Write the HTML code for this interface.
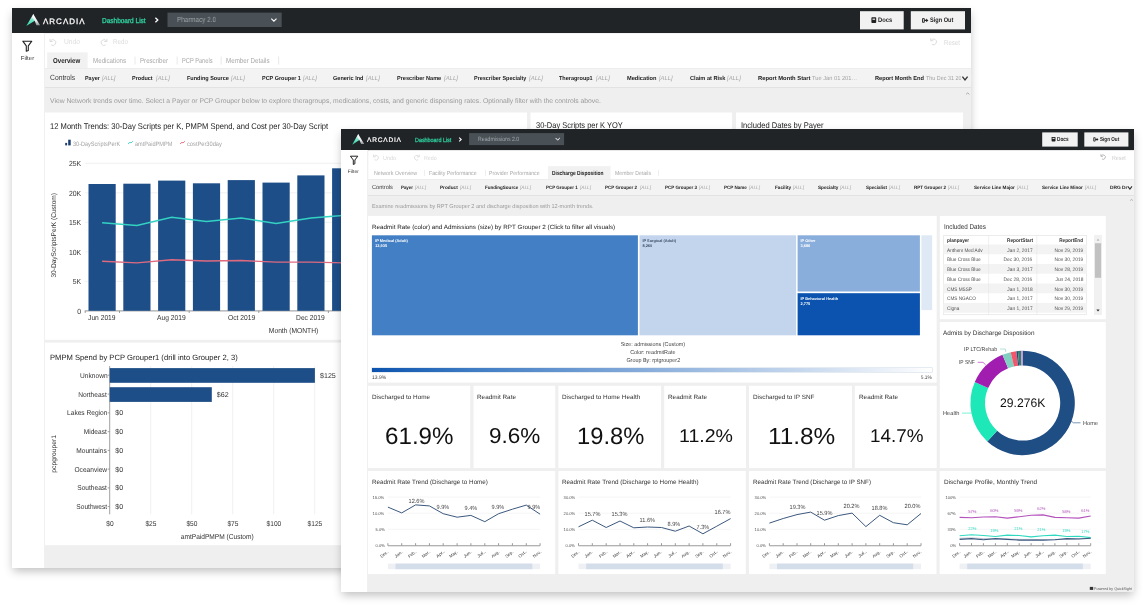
<!DOCTYPE html>
<html><head><meta charset="utf-8"><title>Arcadia dashboards</title>
<style>
html,body{margin:0;padding:0;background:#fff;}
body{width:1146px;height:609px;position:relative;overflow:hidden;font-family:"Liberation Sans",sans-serif;text-rendering:geometricPrecision;}
#w{position:absolute;left:0;top:0;width:1146px;height:609px;will-change:transform;}
.r{position:absolute;}
.t{position:absolute;white-space:nowrap;line-height:0;}
.t i{display:inline-block;width:0;height:40px;}
svg{position:absolute;left:0;top:0;overflow:visible;}
</style></head><body><div id="w">
<div class="r" style="left:12.00px;top:8.00px;width:959.00px;height:560.00px;background:#efefef;box-shadow:0 4px 9px -1px rgba(0,0,0,.26);"></div>
<svg width="1146" height="609"><rect x="12.00" y="8.00" width="959.00" height="25.20" fill="#212427"/></svg>
<div class="r" style="left:12.00px;top:33.20px;width:33.00px;height:534.80px;background:#fff;border-right:1px solid #f0f0f0;box-sizing:border-box;"></div>
<svg width="1146" height="609"><rect x="45.00" y="33.20" width="926.00" height="34.80" fill="#fff"/></svg>
<svg width="1146" height="609"><rect x="47.20" y="52.40" width="40.40" height="15.80" fill="#f1f1f1"/></svg>
<div class="r" style="left:45.00px;top:68.00px;width:926.00px;height:19.50px;background:#f3f3f3;border-top:1px solid #ededed;border-bottom:1px solid #e2e2e2;box-sizing:border-box;"></div>
<svg width="1146" height="609"><rect x="45.00" y="112.50" width="482.00" height="227.30" fill="#fff"/></svg>
<svg width="1146" height="609"><rect x="45.00" y="342.60" width="482.00" height="202.60" fill="#fff"/></svg>
<svg width="1146" height="609"><rect x="530.50" y="112.50" width="201.60" height="100.00" fill="#fff"/></svg>
<svg width="1146" height="609"><rect x="736.00" y="112.50" width="227.00" height="100.00" fill="#fff"/></svg>
<svg width="1146" height="609" viewBox="0 0 1146 609">
<defs>
<linearGradient id="lgA" x1="0" y1="0" x2="0" y2="1"><stop offset="0" stop-color="#ffffff"/><stop offset=".45" stop-color="#7fe8cf"/><stop offset="1" stop-color="#27d3a2"/></linearGradient>
<linearGradient id="lgB" x1="0" y1="0" x2="0" y2="1"><stop offset="0" stop-color="#ffffff"/><stop offset=".6" stop-color="#f0f0f0"/><stop offset="1" stop-color="#8a8f92"/></linearGradient>
</defs>
<polygon points="33.3,14 26.3,25.9 35.2,20.4 34.2,17.2" fill="url(#lgA)"/>
<polygon points="33.3,14 40,25.2 36.4,25.2 34.6,20.6 32.2,17.5" fill="url(#lgB)"/>
</svg>
<div class="t" style="left:42.70px;top:-16.30px;font-size:7.9px;color:#fff;transform:scaleX(1.0109);transform-origin:0 40px;letter-spacing:1.0px;-webkit-text-stroke:0.25px #fff;"><i></i>ΛRCΛDIΛ</div>
<div class="t" style="left:102.10px;top:-17.40px;font-size:7.2px;color:#2fd3a1;transform:scaleX(0.9024);transform-origin:0 40px;-webkit-text-stroke:0.3px #2fd3a1;"><i></i>Dashboard List</div>
<svg width="1146" height="609"><polyline points="155.4,17.7 157.8,20 155.4,22.3" fill="none" stroke="#fff" stroke-width="1.3"/></svg>
<svg width="1146" height="609"><rect x="167.50" y="12.60" width="114.20" height="14.40" fill="#4a5156"/></svg>
<div class="t" style="left:177.20px;top:-17.60px;font-size:7.4px;color:#9fa7ab;transform:scaleX(0.8542);transform-origin:0 40px;"><i></i>Pharmacy 2.0</div>
<svg width="1146" height="609"><polyline points="271.3,18.6 273.9,21.2 276.5,18.6" fill="none" stroke="#fff" stroke-width="1.1"/></svg>
<svg width="1146" height="609"><rect x="860.00" y="11.20" width="43.70" height="18.20" fill="#f2f2f2"/></svg>
<svg width="1146" height="609"><rect x="910.80" y="11.20" width="54.20" height="18.20" fill="#f2f2f2"/></svg>
<svg width="1146" height="609">
<rect x="871.4" y="17.3" width="4.8" height="5.8" rx=".8" fill="#222"/><rect x="872.5" y="18.6" width="2.6" height="1.2" fill="#f3f3f3"/>
<path d="M922.5 18.6h1.8v3.7h-1.8z" fill="none" stroke="#222" stroke-width=".9"/><path d="M924.4 19.8h1.8v-1.3l2.2 1.9-2.2 1.9v-1.3h-1.8z" fill="#222"/>
</svg>
<div class="t" style="left:877.80px;top:-17.70px;font-size:6.6px;color:#222;transform:scaleX(0.8736);transform-origin:0 40px;font-weight:bold;"><i></i>Docs</div>
<div class="t" style="left:930.00px;top:-17.70px;font-size:6.6px;color:#222;transform:scaleX(0.8474);transform-origin:0 40px;font-weight:bold;"><i></i>Sign Out</div>
<svg width="1146" height="609"><path d="M22.8 41.2h9l-3.5 4.6v4.6l-2 .8v-5.4z" fill="none" stroke="#222" stroke-width="1.1" stroke-linejoin="round"/></svg>
<div class="t" style="left:21.06px;top:20.00px;font-size:5.8px;color:#333;transform:scaleX(1.0396);transform-origin:50% 40px;"><i></i>Filter</div>
<svg width="1146" height="609" fill="none" stroke="#d8d8d8" stroke-width=".9">
<path d="M50.3 41.3a2.9 2.9 0 1 1 .9 3.6"/><path d="M50 38.8v2.7h2.7"/>
<path d="M106.6 41.3a2.9 2.9 0 1 0-.9 3.6"/><path d="M106.9 38.8v2.7h-2.7"/>
<path d="M931 40.6a2.9 2.9 0 1 1 .9 3.6"/><path d="M930.7 38.1v2.7h2.7"/>
</svg>
<div class="t" style="left:63.60px;top:4.40px;font-size:7.2px;color:#dcdcdc;transform:scaleX(0.9295);transform-origin:0 40px;"><i></i>Undo</div>
<div class="t" style="left:113.10px;top:4.40px;font-size:7.2px;color:#dcdcdc;transform:scaleX(0.8656);transform-origin:0 40px;"><i></i>Redo</div>
<div class="t" style="left:944.00px;top:4.60px;font-size:7.2px;color:#d9d9d9;transform:scaleX(0.8453);transform-origin:0 40px;"><i></i>Reset</div>
<div class="t" style="left:53.00px;top:23.40px;font-size:7.2px;color:#222;transform:scaleX(0.8495);transform-origin:0 40px;font-weight:bold;"><i></i>Overview</div>
<div class="t" style="left:92.70px;top:23.40px;font-size:7.2px;color:#a9a9a9;transform:scaleX(0.8641);transform-origin:0 40px;"><i></i>Medications</div>
<div class="t" style="left:139.50px;top:23.40px;font-size:7.2px;color:#a9a9a9;transform:scaleX(0.8534);transform-origin:0 40px;"><i></i>Prescriber</div>
<div class="t" style="left:181.70px;top:23.40px;font-size:7.2px;color:#a9a9a9;transform:scaleX(0.7909);transform-origin:0 40px;"><i></i>PCP Panels</div>
<div class="t" style="left:225.90px;top:23.40px;font-size:7.2px;color:#a9a9a9;transform:scaleX(0.8668);transform-origin:0 40px;"><i></i>Member Details</div>
<svg width="1146" height="609"><rect x="134.60" y="56.50" width="0.80" height="8.00" fill="#e3e3e3"/></svg>
<svg width="1146" height="609"><rect x="176.70" y="56.50" width="0.80" height="8.00" fill="#e3e3e3"/></svg>
<svg width="1146" height="609"><rect x="220.70" y="56.50" width="0.80" height="8.00" fill="#e3e3e3"/></svg>
<svg width="1146" height="609"><rect x="278.30" y="56.50" width="0.80" height="8.00" fill="#e3e3e3"/></svg>
<div class="t" style="left:49.70px;top:40.40px;font-size:7.6px;color:#383838;transform:scaleX(0.8904);transform-origin:0 40px;"><i></i>Controls</div>
<div class="t" style="left:84.90px;top:40.30px;font-size:5.8px;color:#222;transform:scaleX(0.9365);transform-origin:0 40px;font-weight:bold;"><i></i>Payer</div>
<div class="t" style="left:101.90px;top:40.30px;font-size:5.9px;color:#a4a4a4;transform:scaleX(0.9799);transform-origin:0 40px;font-style:italic;"><i></i>[ALL]</div>
<div class="t" style="left:132.40px;top:40.30px;font-size:5.8px;color:#222;transform:scaleX(0.9447);transform-origin:0 40px;font-weight:bold;"><i></i>Product</div>
<div class="t" style="left:155.60px;top:40.30px;font-size:5.9px;color:#a4a4a4;transform:scaleX(1.0017);transform-origin:0 40px;font-style:italic;"><i></i>[ALL]</div>
<div class="t" style="left:186.70px;top:40.30px;font-size:5.8px;color:#222;transform:scaleX(0.9469);transform-origin:0 40px;font-weight:bold;"><i></i>Funding Source</div>
<div class="t" style="left:230.70px;top:40.30px;font-size:5.9px;color:#a4a4a4;transform:scaleX(1.0017);transform-origin:0 40px;font-style:italic;"><i></i>[ALL]</div>
<div class="t" style="left:261.50px;top:40.30px;font-size:5.8px;color:#222;transform:scaleX(0.9453);transform-origin:0 40px;font-weight:bold;"><i></i>PCP Grouper 1</div>
<div class="t" style="left:302.60px;top:40.30px;font-size:5.9px;color:#a4a4a4;transform:scaleX(1.0090);transform-origin:0 40px;font-style:italic;"><i></i>[ALL]</div>
<div class="t" style="left:333.40px;top:40.30px;font-size:5.8px;color:#222;transform:scaleX(0.9559);transform-origin:0 40px;font-weight:bold;"><i></i>Generic Ind</div>
<div class="t" style="left:366.40px;top:40.30px;font-size:5.9px;color:#a4a4a4;transform:scaleX(1.0017);transform-origin:0 40px;font-style:italic;"><i></i>[ALL]</div>
<div class="t" style="left:397.30px;top:40.30px;font-size:5.8px;color:#222;transform:scaleX(0.9587);transform-origin:0 40px;font-weight:bold;"><i></i>Prescriber Name</div>
<div class="t" style="left:443.90px;top:40.30px;font-size:5.9px;color:#a4a4a4;transform:scaleX(1.0090);transform-origin:0 40px;font-style:italic;"><i></i>[ALL]</div>
<div class="t" style="left:474.30px;top:40.30px;font-size:5.8px;color:#222;transform:scaleX(0.9394);transform-origin:0 40px;font-weight:bold;"><i></i>Prescriber Specialty</div>
<div class="t" style="left:529.00px;top:40.30px;font-size:5.9px;color:#a4a4a4;transform:scaleX(1.0162);transform-origin:0 40px;font-style:italic;"><i></i>[ALL]</div>
<div class="t" style="left:559.30px;top:40.30px;font-size:5.8px;color:#222;transform:scaleX(0.9507);transform-origin:0 40px;font-weight:bold;"><i></i>Theragroup1</div>
<div class="t" style="left:595.50px;top:40.30px;font-size:5.9px;color:#a4a4a4;transform:scaleX(1.0017);transform-origin:0 40px;font-style:italic;"><i></i>[ALL]</div>
<div class="t" style="left:626.80px;top:40.30px;font-size:5.8px;color:#222;transform:scaleX(0.9738);transform-origin:0 40px;font-weight:bold;"><i></i>Medication</div>
<div class="t" style="left:658.80px;top:40.30px;font-size:5.9px;color:#a4a4a4;transform:scaleX(0.9872);transform-origin:0 40px;font-style:italic;"><i></i>[ALL]</div>
<div class="t" style="left:689.60px;top:40.30px;font-size:5.8px;color:#222;transform:scaleX(0.9718);transform-origin:0 40px;font-weight:bold;"><i></i>Claim at Risk</div>
<div class="t" style="left:727.40px;top:40.30px;font-size:5.9px;color:#a4a4a4;transform:scaleX(1.0017);transform-origin:0 40px;font-style:italic;"><i></i>[ALL]</div>
<div class="t" style="left:757.70px;top:40.30px;font-size:5.8px;color:#222;transform:scaleX(0.9996);transform-origin:0 40px;font-weight:bold;"><i></i>Report Month Start</div>
<div class="t" style="left:812.30px;top:40.30px;font-size:5.9px;color:#a3a3a3;transform:scaleX(0.9682);transform-origin:0 40px;"><i></i>Tue Jan 01 201…</div>
<div class="t" style="left:874.50px;top:40.30px;font-size:5.8px;color:#222;transform:scaleX(0.9730);transform-origin:0 40px;font-weight:bold;"><i></i>Report Month End</div>
<div class="t" style="left:925.90px;top:40.30px;font-size:5.9px;color:#a3a3a3;transform:scaleX(0.9198);transform-origin:0 40px;"><i></i>Thu Dec 31 20</div>
<svg width="1146" height="609"><rect x="961.20" y="74.00" width="10.00" height="9.00" fill="#f3f3f3"/></svg>
<svg width="1146" height="609"><polyline points="962.4,76.6 965,80 967.6,76.6" fill="none" stroke="#333" stroke-width="1.3"/><polyline points="966,94.4 967.7,92.9 969.4,94.4" fill="none" stroke="#999" stroke-width=".8"/></svg>
<div class="t" style="left:49.70px;top:63.00px;font-size:6.8px;color:#9a9a9a;transform:scaleX(0.9972);transform-origin:0 40px;"><i></i>View Network trends over time. Select a Payer or PCP Grouper below to explore theragroups, medications, costs, and generic dispensing rates. Optionally filter with the controls above.</div>
<div class="t" style="left:49.90px;top:88.60px;font-size:8.3px;color:#222;transform:scaleX(0.9154);transform-origin:0 40px;"><i></i>12 Month Trends: 30-Day Scripts per K, PMPM Spend, and Cost per 30-Day Script</div>
<div class="t" style="left:535.80px;top:88.20px;font-size:8.3px;color:#222;transform:scaleX(0.9017);transform-origin:0 40px;"><i></i>30-Day Scripts per K YOY</div>
<div class="t" style="left:740.80px;top:88.20px;font-size:8.3px;color:#222;transform:scaleX(0.9123);transform-origin:0 40px;"><i></i>Included Dates by Payer</div>
<svg width="1146" height="609"><rect x="65.20" y="142.90" width="1.90" height="2.50" fill="#1c3d70"/></svg>
<svg width="1146" height="609"><rect x="68.20" y="139.70" width="2.50" height="5.70" fill="#1c3d70"/></svg>
<div class="t" style="left:72.60px;top:105.80px;font-size:6.3px;color:#a3a3a3;transform:scaleX(0.8792);transform-origin:0 40px;"><i></i>30-DayScriptsPerK</div>
<div class="t" style="left:135.10px;top:105.80px;font-size:6.3px;color:#a3a3a3;transform:scaleX(0.8902);transform-origin:0 40px;"><i></i>amtPaidPMPM</div>
<div class="t" style="left:186.90px;top:105.80px;font-size:6.3px;color:#a3a3a3;transform:scaleX(0.9059);transform-origin:0 40px;"><i></i>costPer30day</div>
<svg width="1146" height="609"><polyline points="128,144 130,142.2 131,143 132.8,141.2" fill="none" stroke="#3ad0c6" stroke-width=".9"/><polyline points="180,144 182,142.2 183,143 184.9,141.2" fill="none" stroke="#e9657c" stroke-width=".9"/><line x1="84.8" x2="345" y1="163.3" y2="163.3" stroke="#ececec" stroke-width=".8"/><line x1="84.8" x2="345" y1="192.8" y2="192.8" stroke="#ececec" stroke-width=".8"/><line x1="84.8" x2="345" y1="222.3" y2="222.3" stroke="#ececec" stroke-width=".8"/><line x1="84.8" x2="345" y1="251.8" y2="251.8" stroke="#ececec" stroke-width=".8"/><line x1="84.8" x2="345" y1="281.3" y2="281.3" stroke="#ececec" stroke-width=".8"/><line x1="84.8" x2="345" y1="310.9" y2="310.9" stroke="#888" stroke-width=".9"/><rect x="88.5" y="184" width="27.2" height="126.8" fill="#1d4e88"/><rect x="123.3" y="183.7" width="27.2" height="127.1" fill="#1d4e88"/><rect x="158.1" y="180.6" width="27.2" height="130.2" fill="#1d4e88"/><rect x="192.9" y="183.3" width="27.2" height="127.5" fill="#1d4e88"/><rect x="227.7" y="180.1" width="27.2" height="130.7" fill="#1d4e88"/><rect x="262.5" y="182.6" width="27.2" height="128.2" fill="#1d4e88"/><rect x="297.3" y="175.4" width="27.2" height="135.4" fill="#1d4e88"/><rect x="332.1" y="168.3" width="27.2" height="142.5" fill="#1d4e88"/><polyline fill="none" stroke="#33d2c2" stroke-width="1.4" points="102.1,222.7 136.9,225.5 171.7,217.2 206.5,221.5 241.3,218 276.1,223.5 310.9,218 345.7,215.2"/><polyline fill="none" stroke="#df6a80" stroke-width="1.4" points="102.1,261.3 136.9,262.9 171.7,259.8 206.5,261 241.3,260.5 276.1,262.1 310.9,262.1 345.7,262.9"/><line x1="85.2" x2="85.2" y1="310.9" y2="313" stroke="#888" stroke-width=".8"/><line x1="119.5" x2="119.5" y1="310.9" y2="313" stroke="#888" stroke-width=".8"/><line x1="189.2" x2="189.2" y1="310.9" y2="313" stroke="#888" stroke-width=".8"/><line x1="258.8" x2="258.8" y1="310.9" y2="313" stroke="#888" stroke-width=".8"/><line x1="328.4" x2="328.4" y1="310.9" y2="313" stroke="#888" stroke-width=".8"/></svg>
<div class="t" style="left:67.83px;top:126.00px;font-size:7.4px;color:#333;transform:scaleX(0.9300);transform-origin:100% 40px;"><i></i>25K</div>
<div class="t" style="left:67.83px;top:155.50px;font-size:7.4px;color:#333;transform:scaleX(0.9300);transform-origin:100% 40px;"><i></i>20K</div>
<div class="t" style="left:67.83px;top:185.00px;font-size:7.4px;color:#333;transform:scaleX(0.9300);transform-origin:100% 40px;"><i></i>15K</div>
<div class="t" style="left:67.83px;top:214.50px;font-size:7.4px;color:#333;transform:scaleX(0.9300);transform-origin:100% 40px;"><i></i>10K</div>
<div class="t" style="left:71.95px;top:244.00px;font-size:7.4px;color:#333;transform:scaleX(0.9300);transform-origin:100% 40px;"><i></i>5K</div>
<div class="t" style="left:76.88px;top:273.50px;font-size:7.4px;color:#333;transform:scaleX(0.9300);transform-origin:100% 40px;"><i></i>0</div>
<div class="t" style="left:87.29px;top:280.00px;font-size:7.2px;color:#333;transform:scaleX(0.9300);transform-origin:50% 40px;"><i></i>Jun 2019</div>
<div class="t" style="left:156.29px;top:280.00px;font-size:7.2px;color:#333;transform:scaleX(0.9300);transform-origin:50% 40px;"><i></i>Aug 2019</div>
<div class="t" style="left:226.69px;top:280.00px;font-size:7.2px;color:#333;transform:scaleX(0.9300);transform-origin:50% 40px;"><i></i>Oct 2019</div>
<div class="t" style="left:295.49px;top:280.00px;font-size:7.2px;color:#333;transform:scaleX(0.9300);transform-origin:50% 40px;"><i></i>Dec 2019</div>
<div class="t" style="left:267.40px;top:293.30px;font-size:7.2px;color:#333;transform:scaleX(0.9300);transform-origin:50% 40px;"><i></i>Month (MONTH)</div>
<div class="t" style="left:-32.66px;top:152.80px;font-size:6.9px;color:#333;transform:rotate(-90deg) scaleX(0.9521);transform-origin:100% 40px;"><i></i>30-DayScriptsPerK (Custom)</div>
<div class="t" style="left:49.70px;top:319.50px;font-size:7.7px;color:#222;transform:scaleX(0.9923);transform-origin:0 40px;"><i></i>PMPM Spend by PCP Grouper1 (drill into Grouper 2, 3)</div>
<svg width="1146" height="609"><line x1="150.7" x2="150.7" y1="366" y2="514.3" stroke="#ececec" stroke-width=".8"/><line x1="191.7" x2="191.7" y1="366" y2="514.3" stroke="#ececec" stroke-width=".8"/><line x1="232.7" x2="232.7" y1="366" y2="514.3" stroke="#ececec" stroke-width=".8"/><line x1="273.7" x2="273.7" y1="366" y2="514.3" stroke="#ececec" stroke-width=".8"/><line x1="314.7" x2="314.7" y1="366" y2="514.3" stroke="#ececec" stroke-width=".8"/><line x1="109.7" x2="109.7" y1="366" y2="514.3" stroke="#888" stroke-width=".8"/><line x1="107.7" x2="109.7" y1="375.2" y2="375.2" stroke="#888" stroke-width=".8"/><line x1="107.7" x2="109.7" y1="394.1" y2="394.1" stroke="#888" stroke-width=".8"/><line x1="107.7" x2="109.7" y1="412.9" y2="412.9" stroke="#888" stroke-width=".8"/><line x1="107.7" x2="109.7" y1="431.7" y2="431.7" stroke="#888" stroke-width=".8"/><line x1="107.7" x2="109.7" y1="450.4" y2="450.4" stroke="#888" stroke-width=".8"/><line x1="107.7" x2="109.7" y1="469.1" y2="469.1" stroke="#888" stroke-width=".8"/><line x1="107.7" x2="109.7" y1="487.9" y2="487.9" stroke="#888" stroke-width=".8"/><line x1="107.7" x2="109.7" y1="506.6" y2="506.6" stroke="#888" stroke-width=".8"/><rect x="109.7" y="368.1" width="205.2" height="14.7" fill="#1d4e88"/><rect x="109.7" y="387.2" width="102.1" height="14.7" fill="#1d4e88"/></svg>
<div class="t" style="left:77.60px;top:337.70px;font-size:7.1px;color:#333;transform:scaleX(0.9300);transform-origin:100% 40px;"><i></i>Unknown</div>
<div class="t" style="left:320.00px;top:337.70px;font-size:7.1px;color:#333;transform:scaleX(1.0000);transform-origin:0 40px;"><i></i>$125</div>
<div class="t" style="left:76.42px;top:356.60px;font-size:7.1px;color:#333;transform:scaleX(0.9300);transform-origin:100% 40px;"><i></i>Northeast</div>
<div class="t" style="left:216.80px;top:356.60px;font-size:7.1px;color:#333;transform:scaleX(1.0000);transform-origin:0 40px;"><i></i>$62</div>
<div class="t" style="left:63.78px;top:375.40px;font-size:7.1px;color:#333;transform:scaleX(0.9300);transform-origin:100% 40px;"><i></i>Lakes Region</div>
<div class="t" style="left:115.20px;top:375.40px;font-size:7.1px;color:#333;transform:scaleX(1.0000);transform-origin:0 40px;"><i></i>$0</div>
<div class="t" style="left:82.34px;top:394.20px;font-size:7.1px;color:#333;transform:scaleX(0.9300);transform-origin:100% 40px;"><i></i>Mideast</div>
<div class="t" style="left:115.20px;top:394.20px;font-size:7.1px;color:#333;transform:scaleX(1.0000);transform-origin:0 40px;"><i></i>$0</div>
<div class="t" style="left:74.44px;top:412.90px;font-size:7.1px;color:#333;transform:scaleX(0.9300);transform-origin:100% 40px;"><i></i>Mountains</div>
<div class="t" style="left:115.20px;top:412.90px;font-size:7.1px;color:#333;transform:scaleX(1.0000);transform-origin:0 40px;"><i></i>$0</div>
<div class="t" style="left:72.08px;top:431.60px;font-size:7.1px;color:#333;transform:scaleX(0.9300);transform-origin:100% 40px;"><i></i>Oceanview</div>
<div class="t" style="left:115.20px;top:431.60px;font-size:7.1px;color:#333;transform:scaleX(1.0000);transform-origin:0 40px;"><i></i>$0</div>
<div class="t" style="left:75.23px;top:450.40px;font-size:7.1px;color:#333;transform:scaleX(0.9300);transform-origin:100% 40px;"><i></i>Southeast</div>
<div class="t" style="left:115.20px;top:450.40px;font-size:7.1px;color:#333;transform:scaleX(1.0000);transform-origin:0 40px;"><i></i>$0</div>
<div class="t" style="left:74.05px;top:469.10px;font-size:7.1px;color:#333;transform:scaleX(0.9300);transform-origin:100% 40px;"><i></i>Southwest</div>
<div class="t" style="left:115.20px;top:469.10px;font-size:7.1px;color:#333;transform:scaleX(1.0000);transform-origin:0 40px;"><i></i>$0</div>
<div class="t" style="left:105.75px;top:486.20px;font-size:7.1px;color:#333;transform:scaleX(0.9300);transform-origin:50% 40px;"><i></i>$0</div>
<div class="t" style="left:144.78px;top:486.20px;font-size:7.1px;color:#333;transform:scaleX(0.9300);transform-origin:50% 40px;"><i></i>$25</div>
<div class="t" style="left:185.78px;top:486.20px;font-size:7.1px;color:#333;transform:scaleX(0.9300);transform-origin:50% 40px;"><i></i>$50</div>
<div class="t" style="left:226.78px;top:486.20px;font-size:7.1px;color:#333;transform:scaleX(0.9300);transform-origin:50% 40px;"><i></i>$75</div>
<div class="t" style="left:265.80px;top:486.20px;font-size:7.1px;color:#333;transform:scaleX(0.9300);transform-origin:50% 40px;"><i></i>$100</div>
<div class="t" style="left:306.80px;top:486.20px;font-size:7.1px;color:#333;transform:scaleX(0.9300);transform-origin:50% 40px;"><i></i>$125</div>
<div class="t" style="left:178.04px;top:499.00px;font-size:7.1px;color:#333;transform:scaleX(0.9300);transform-origin:50% 40px;"><i></i>amtPaidPMPM (Custom)</div>
<div class="t" style="left:18.48px;top:394.70px;font-size:6.7px;color:#333;transform:rotate(-90deg) scaleX(1.0020);transform-origin:100% 40px;"><i></i>pcpgrouper1</div>
<div class="r" style="left:341.00px;top:129.00px;width:793.00px;height:463.30px;background:#efefef;box-shadow:0 4px 9px -1px rgba(0,0,0,.26);"></div>
<svg width="1146" height="609"><rect x="341.00" y="129.00" width="793.00" height="21.30" fill="#212427"/></svg>
<div class="r" style="left:341.00px;top:150.30px;width:27.30px;height:442.00px;background:#fff;border-right:1px solid #f0f0f0;box-sizing:border-box;"></div>
<svg width="1146" height="609"><rect x="368.30" y="150.30" width="765.70" height="29.00" fill="#fff"/></svg>
<svg width="1146" height="609"><rect x="548.00" y="166.20" width="62.50" height="13.10" fill="#f1f1f1"/></svg>
<div class="r" style="left:368.30px;top:179.00px;width:765.70px;height:16.80px;background:#f3f3f3;border-top:1px solid #ededed;border-bottom:1px solid #e2e2e2;box-sizing:border-box;"></div>
<svg width="1146" height="609"><rect x="368.00" y="215.90" width="568.70" height="166.70" fill="#fff"/></svg>
<svg width="1146" height="609"><rect x="939.80" y="215.90" width="166.00" height="103.30" fill="#fff"/></svg>
<svg width="1146" height="609"><rect x="939.80" y="322.00" width="166.00" height="146.00" fill="#fff"/></svg>
<svg width="1146" height="609"><rect x="368.00" y="385.80" width="102.20" height="82.20" fill="#fff"/></svg>
<svg width="1146" height="609"><rect x="473.50" y="385.80" width="81.70" height="82.20" fill="#fff"/></svg>
<svg width="1146" height="609"><rect x="558.40" y="385.80" width="102.60" height="82.20" fill="#fff"/></svg>
<svg width="1146" height="609"><rect x="664.20" y="385.80" width="81.80" height="82.20" fill="#fff"/></svg>
<svg width="1146" height="609"><rect x="749.00" y="385.80" width="103.00" height="82.20" fill="#fff"/></svg>
<svg width="1146" height="609"><rect x="854.80" y="385.80" width="81.90" height="82.20" fill="#fff"/></svg>
<svg width="1146" height="609"><rect x="368.00" y="471.00" width="187.20" height="103.10" fill="#fff"/></svg>
<svg width="1146" height="609"><rect x="558.40" y="471.00" width="187.40" height="103.10" fill="#fff"/></svg>
<svg width="1146" height="609"><rect x="749.00" y="471.00" width="187.50" height="103.10" fill="#fff"/></svg>
<svg width="1146" height="609"><rect x="939.60" y="471.00" width="166.20" height="103.10" fill="#fff"/></svg>
<svg width="1146" height="609">
<polygon points="358.2,134 352.2,144.7 359.8,139.7 359,136.9" fill="url(#lgA)"/>
<polygon points="358.2,134 364.2,144 361.1,144 359.4,139.9 357.3,137.2" fill="url(#lgB)"/>
</svg>
<div class="t" style="left:366.60px;top:102.40px;font-size:6.6px;color:#fff;transform:scaleX(0.9955);transform-origin:0 40px;letter-spacing:0.8px;-webkit-text-stroke:0.2px #fff;"><i></i>ΛRCΛDIΛ</div>
<div class="t" style="left:415.20px;top:101.50px;font-size:6.0px;color:#2fd3a1;transform:scaleX(0.8995);transform-origin:0 40px;-webkit-text-stroke:0.25px #2fd3a1;"><i></i>Dashboard List</div>
<svg width="1146" height="609"><polyline points="459.2,137.6 461.2,139.5 459.2,141.4" fill="none" stroke="#fff" stroke-width="1.1"/></svg>
<svg width="1146" height="609"><rect x="469.10" y="133.10" width="95.00" height="12.00" fill="#4a5156"/></svg>
<div class="t" style="left:477.50px;top:101.30px;font-size:6.1px;color:#9fa7ab;transform:scaleX(0.8518);transform-origin:0 40px;"><i></i>Readmissions 2.0</div>
<svg width="1146" height="609"><polyline points="555.6,138 557.7,140.1 559.8,138" fill="none" stroke="#fff" stroke-width="1"/></svg>
<svg width="1146" height="609"><rect x="1042.20" y="132.40" width="35.50" height="14.20" fill="#f2f2f2"/></svg>
<svg width="1146" height="609"><rect x="1084.30" y="132.40" width="44.10" height="14.20" fill="#f2f2f2"/></svg>
<svg width="1146" height="609">
<rect x="1051.6" y="136.9" width="3.9" height="4.6" rx=".7" fill="#222"/><rect x="1052.5" y="137.9" width="2.1" height="1" fill="#f3f3f3"/>
<path d="M1093.7 137.7h1.5v3.4h-1.5z" fill="none" stroke="#222" stroke-width=".8"/><path d="M1095.3 138.9h1.4v-1.1l1.8 1.6-1.8 1.6v-1.1h-1.4z" fill="#222"/>
</svg>
<div class="t" style="left:1056.80px;top:101.10px;font-size:5.9px;color:#222;transform:scaleX(0.8040);transform-origin:0 40px;font-weight:bold;"><i></i>Docs</div>
<div class="t" style="left:1099.70px;top:101.10px;font-size:5.9px;color:#222;transform:scaleX(0.7811);transform-origin:0 40px;font-weight:bold;"><i></i>Sign Out</div>
<svg width="1146" height="609"><path d="M350.4 156.2h7.4l-2.9 3.8v3.8l-1.6.7v-4.5z" fill="none" stroke="#222" stroke-width="1" stroke-linejoin="round"/></svg>
<div class="t" style="left:348.27px;top:133.00px;font-size:4.8px;color:#333;transform:scaleX(1.0312);transform-origin:50% 40px;"><i></i>Filter</div>
<svg width="1146" height="609" fill="none" stroke="#d8d8d8" stroke-width=".8">
<path d="M373.8 156.7a2.4 2.4 0 1 1 .8 3"/><path d="M373.5 154.6v2.3h2.3"/>
<path d="M419 156.7a2.4 2.4 0 1 0-.8 3"/><path d="M419.3 154.6v2.3h-2.3"/>
<path d="M1101.2 156.1a2.2 2.2 0 1 1 .7 2.8" stroke="#aaa"/><path d="M1100.9 154.2v2.1h2.1" stroke="#aaa"/>
</svg>
<div class="t" style="left:383.10px;top:120.00px;font-size:6px;color:#d9d9d9;transform:scaleX(0.9133);transform-origin:0 40px;"><i></i>Undo</div>
<div class="t" style="left:424.10px;top:120.00px;font-size:6px;color:#d9d9d9;transform:scaleX(0.8784);transform-origin:0 40px;"><i></i>Redo</div>
<div class="t" style="left:1111.50px;top:119.60px;font-size:6px;color:#cdcdcd;transform:scaleX(0.8804);transform-origin:0 40px;"><i></i>Reset</div>
<div class="t" style="left:373.90px;top:135.00px;font-size:5.9px;color:#a9a9a9;transform:scaleX(0.9004);transform-origin:0 40px;"><i></i>Network Overview</div>
<div class="t" style="left:429.10px;top:135.00px;font-size:5.9px;color:#a9a9a9;transform:scaleX(0.8871);transform-origin:0 40px;"><i></i>Facility Performance</div>
<div class="t" style="left:489.00px;top:135.00px;font-size:5.9px;color:#a9a9a9;transform:scaleX(0.8817);transform-origin:0 40px;"><i></i>Provider Performance</div>
<div class="t" style="left:614.70px;top:135.00px;font-size:5.9px;color:#a9a9a9;transform:scaleX(0.8738);transform-origin:0 40px;"><i></i>Member Details</div>
<div class="t" style="left:552.40px;top:135.00px;font-size:5.9px;color:#222;transform:scaleX(0.8284);transform-origin:0 40px;font-weight:bold;"><i></i>Discharge Disposition</div>
<svg width="1146" height="609"><rect x="424.10" y="169.90" width="0.70" height="6.00" fill="#e8e8e8"/></svg>
<svg width="1146" height="609"><rect x="485.00" y="169.90" width="0.70" height="6.00" fill="#e8e8e8"/></svg>
<svg width="1146" height="609"><rect x="658.30" y="169.90" width="0.70" height="6.00" fill="#e8e8e8"/></svg>
<div class="t" style="left:371.80px;top:149.30px;font-size:5.9px;color:#383838;transform:scaleX(0.9513);transform-origin:0 40px;"><i></i>Controls</div>
<div class="t" style="left:400.60px;top:149.30px;font-size:4.8px;color:#222;transform:scaleX(0.9099);transform-origin:0 40px;font-weight:bold;"><i></i>Payer</div>
<div class="t" style="left:414.60px;top:149.30px;font-size:4.9px;color:#a4a4a4;transform:scaleX(0.9702);transform-origin:0 40px;font-style:italic;"><i></i>[ALL]</div>
<div class="t" style="left:440.10px;top:149.30px;font-size:4.8px;color:#222;transform:scaleX(0.9761);transform-origin:0 40px;font-weight:bold;"><i></i>Product</div>
<div class="t" style="left:459.90px;top:149.30px;font-size:4.9px;color:#a4a4a4;transform:scaleX(0.9702);transform-origin:0 40px;font-style:italic;"><i></i>[ALL]</div>
<div class="t" style="left:485.10px;top:149.30px;font-size:4.8px;color:#222;transform:scaleX(0.9432);transform-origin:0 40px;font-weight:bold;"><i></i>FundingSource</div>
<div class="t" style="left:520.40px;top:149.30px;font-size:4.9px;color:#a4a4a4;transform:scaleX(0.9702);transform-origin:0 40px;font-style:italic;"><i></i>[ALL]</div>
<div class="t" style="left:545.90px;top:149.30px;font-size:4.8px;color:#222;transform:scaleX(0.9338);transform-origin:0 40px;font-weight:bold;"><i></i>PCP Grouper 1</div>
<div class="t" style="left:579.80px;top:149.30px;font-size:4.9px;color:#a4a4a4;transform:scaleX(0.9702);transform-origin:0 40px;font-style:italic;"><i></i>[ALL]</div>
<div class="t" style="left:605.30px;top:149.30px;font-size:4.8px;color:#222;transform:scaleX(0.9426);transform-origin:0 40px;font-weight:bold;"><i></i>PCP Grouper 2</div>
<div class="t" style="left:639.50px;top:149.30px;font-size:4.9px;color:#a4a4a4;transform:scaleX(0.9702);transform-origin:0 40px;font-style:italic;"><i></i>[ALL]</div>
<div class="t" style="left:664.90px;top:149.30px;font-size:4.8px;color:#222;transform:scaleX(0.9426);transform-origin:0 40px;font-weight:bold;"><i></i>PCP Grouper 3</div>
<div class="t" style="left:699.10px;top:149.30px;font-size:4.9px;color:#a4a4a4;transform:scaleX(0.9702);transform-origin:0 40px;font-style:italic;"><i></i>[ALL]</div>
<div class="t" style="left:724.30px;top:149.30px;font-size:4.8px;color:#222;transform:scaleX(0.9467);transform-origin:0 40px;font-weight:bold;"><i></i>PCP Name</div>
<div class="t" style="left:749.30px;top:149.30px;font-size:4.9px;color:#a4a4a4;transform:scaleX(0.9702);transform-origin:0 40px;font-style:italic;"><i></i>[ALL]</div>
<div class="t" style="left:774.60px;top:149.30px;font-size:4.8px;color:#222;transform:scaleX(0.9734);transform-origin:0 40px;font-weight:bold;"><i></i>Facility</div>
<div class="t" style="left:792.80px;top:149.30px;font-size:4.9px;color:#a4a4a4;transform:scaleX(0.9702);transform-origin:0 40px;font-style:italic;"><i></i>[ALL]</div>
<div class="t" style="left:818.00px;top:149.30px;font-size:4.8px;color:#222;transform:scaleX(0.9631);transform-origin:0 40px;font-weight:bold;"><i></i>Specialty</div>
<div class="t" style="left:840.40px;top:149.30px;font-size:4.9px;color:#a4a4a4;transform:scaleX(0.9702);transform-origin:0 40px;font-style:italic;"><i></i>[ALL]</div>
<div class="t" style="left:865.90px;top:149.30px;font-size:4.8px;color:#222;transform:scaleX(0.9326);transform-origin:0 40px;font-weight:bold;"><i></i>Specialist</div>
<div class="t" style="left:888.90px;top:149.30px;font-size:4.9px;color:#a4a4a4;transform:scaleX(0.9702);transform-origin:0 40px;font-style:italic;"><i></i>[ALL]</div>
<div class="t" style="left:914.30px;top:149.30px;font-size:4.8px;color:#222;transform:scaleX(0.9447);transform-origin:0 40px;font-weight:bold;"><i></i>RPT Grouper 2</div>
<div class="t" style="left:948.40px;top:149.30px;font-size:4.9px;color:#a4a4a4;transform:scaleX(0.9702);transform-origin:0 40px;font-style:italic;"><i></i>[ALL]</div>
<div class="t" style="left:973.70px;top:149.30px;font-size:4.8px;color:#222;transform:scaleX(0.9642);transform-origin:0 40px;font-weight:bold;"><i></i>Service Line Major</div>
<div class="t" style="left:1016.70px;top:149.30px;font-size:4.9px;color:#a4a4a4;transform:scaleX(0.9702);transform-origin:0 40px;font-style:italic;"><i></i>[ALL]</div>
<div class="t" style="left:1041.70px;top:149.30px;font-size:4.8px;color:#222;transform:scaleX(0.9583);transform-origin:0 40px;font-weight:bold;"><i></i>Service Line Minor</div>
<div class="t" style="left:1084.70px;top:149.30px;font-size:4.9px;color:#a4a4a4;transform:scaleX(0.9702);transform-origin:0 40px;font-style:italic;"><i></i>[ALL]</div>
<div class="t" style="left:1110.30px;top:149.30px;font-size:4.8px;color:#222;transform:scaleX(1.0096);transform-origin:0 40px;font-weight:bold;"><i></i>DRG Dr</div>
<svg width="1146" height="609"><polyline points="1127.8,186.3 1129.9,189 1132,186.3" fill="none" stroke="#333" stroke-width="1.1"/><polyline points="1130.1,200.6 1131.5,199.4 1132.9,200.6" fill="none" stroke="#999" stroke-width=".7"/></svg>
<div class="t" style="left:371.80px;top:168.10px;font-size:5.7px;color:#9a9a9a;transform:scaleX(0.9763);transform-origin:0 40px;"><i></i>Examine readmissions by RPT Grouper 2 and discharge disposition with 12-month trends.</div>
<div class="t" style="left:371.80px;top:189.00px;font-size:6.1px;color:#222;transform:scaleX(1.0336);transform-origin:0 40px;"><i></i>Readmit Rate (color) and Admissions (size) by RPT Grouper 2 (Click to filter all visuals)</div>
<svg width="1146" height="609"><rect x="371.90" y="235.30" width="266.00" height="100.00" fill="#437fc4"/></svg>
<svg width="1146" height="609"><rect x="639.50" y="235.30" width="156.60" height="100.00" fill="#c3d5ed"/></svg>
<svg width="1146" height="609"><rect x="797.60" y="235.30" width="122.30" height="56.20" fill="#8aaedb"/></svg>
<svg width="1146" height="609"><rect x="797.60" y="293.20" width="122.30" height="42.10" fill="#0b53ae"/></svg>
<svg width="1146" height="609"><rect x="921.40" y="235.30" width="10.80" height="74.80" fill="#dfe8f5"/></svg>
<div class="t" style="left:375.20px;top:202.10px;font-size:3.9px;color:#fff;transform:scaleX(1.0000);transform-origin:0 40px;font-weight:bold;"><i></i>IP Medical (Adult)</div>
<div class="t" style="left:375.20px;top:206.90px;font-size:3.9px;color:#fff;transform:scaleX(1.0000);transform-origin:0 40px;font-weight:bold;"><i></i>13,935</div>
<div class="t" style="left:642.40px;top:202.10px;font-size:3.9px;color:#3d4f66;transform:scaleX(1.0000);transform-origin:0 40px;font-weight:bold;"><i></i>IP Surgical (Adult)</div>
<div class="t" style="left:642.40px;top:206.90px;font-size:3.9px;color:#3d4f66;transform:scaleX(1.0000);transform-origin:0 40px;font-weight:bold;"><i></i>8,260</div>
<div class="t" style="left:800.50px;top:202.10px;font-size:3.9px;color:#fff;transform:scaleX(1.0000);transform-origin:0 40px;font-weight:bold;"><i></i>IP Other</div>
<div class="t" style="left:800.50px;top:206.90px;font-size:3.9px;color:#fff;transform:scaleX(1.0000);transform-origin:0 40px;font-weight:bold;"><i></i>3,686</div>
<div class="t" style="left:800.50px;top:260.00px;font-size:3.9px;color:#fff;transform:scaleX(1.0000);transform-origin:0 40px;font-weight:bold;"><i></i>IP Behavioral Health</div>
<div class="t" style="left:800.50px;top:264.80px;font-size:3.9px;color:#fff;transform:scaleX(1.0000);transform-origin:0 40px;font-weight:bold;"><i></i>2,775</div>
<div class="t" style="left:619.11px;top:306.30px;font-size:5.7px;color:#444;transform:scaleX(0.9500);transform-origin:50% 40px;"><i></i>Size: admissions (Custom)</div>
<div class="t" style="left:629.08px;top:314.20px;font-size:5.7px;color:#444;transform:scaleX(0.9500);transform-origin:50% 40px;"><i></i>Color: readmitRate</div>
<div class="t" style="left:624.64px;top:322.20px;font-size:5.7px;color:#444;transform:scaleX(0.9500);transform-origin:50% 40px;"><i></i>Group By: rptgrouper2</div>
<div class="r" style="left:371.90px;top:368.40px;width:560.40px;height:4.00px;background:linear-gradient(90deg,#0b53ae 0%,#3f7cc3 18%,#8aaedb 50%,#d3e0f1 82%,#ffffff 100%);box-shadow:0 0 0 .6px #d4deeb;"></div>
<div class="t" style="left:372.00px;top:339.00px;font-size:5.2px;color:#444;transform:scaleX(0.9699);transform-origin:0 40px;"><i></i>13.9%</div>
<div class="t" style="left:920.45px;top:339.00px;font-size:5.2px;color:#444;transform:scaleX(0.9281);transform-origin:100% 40px;"><i></i>5.1%</div>
<div class="t" style="left:371.90px;top:358.80px;font-size:6.2px;color:#333;transform:scaleX(1.0300);transform-origin:0 40px;"><i></i>Discharged to Home</div>
<div class="t" style="left:384.60px;top:404.00px;font-size:23.7px;color:#111;transform:scaleX(1.0208);transform-origin:0 40px;"><i></i>61.9%</div>
<div class="t" style="left:477.40px;top:358.80px;font-size:6.2px;color:#333;transform:scaleX(1.0300);transform-origin:0 40px;"><i></i>Readmit Rate</div>
<div class="t" style="left:488.60px;top:403.30px;font-size:21.5px;color:#111;transform:scaleX(1.0468);transform-origin:0 40px;"><i></i>9.6%</div>
<div class="t" style="left:562.30px;top:358.80px;font-size:6.2px;color:#333;transform:scaleX(1.0300);transform-origin:0 40px;"><i></i>Discharged to Home Health</div>
<div class="t" style="left:576.50px;top:404.00px;font-size:23.7px;color:#111;transform:scaleX(1.0015);transform-origin:0 40px;"><i></i>19.8%</div>
<div class="t" style="left:668.10px;top:358.80px;font-size:6.2px;color:#333;transform:scaleX(1.0300);transform-origin:0 40px;"><i></i>Readmit Rate</div>
<div class="t" style="left:678.70px;top:401.90px;font-size:18.5px;color:#111;transform:scaleX(1.0571);transform-origin:0 40px;"><i></i>11.2%</div>
<div class="t" style="left:752.90px;top:358.80px;font-size:6.2px;color:#333;transform:scaleX(1.0300);transform-origin:0 40px;"><i></i>Discharged to IP SNF</div>
<div class="t" style="left:767.50px;top:404.00px;font-size:23.2px;color:#111;transform:scaleX(1.0506);transform-origin:0 40px;"><i></i>11.8%</div>
<div class="t" style="left:858.70px;top:358.80px;font-size:6.2px;color:#333;transform:scaleX(1.0300);transform-origin:0 40px;"><i></i>Readmit Rate</div>
<div class="t" style="left:869.60px;top:401.90px;font-size:18.5px;color:#111;transform:scaleX(1.0180);transform-origin:0 40px;"><i></i>14.7%</div>
<div class="t" style="left:372.00px;top:443.90px;font-size:6.3px;color:#333;transform:scaleX(0.9979);transform-origin:0 40px;"><i></i>Readmit Rate Trend (Discharge to Home)</div>
<div class="t" style="left:562.40px;top:443.90px;font-size:6.3px;color:#333;transform:scaleX(1.0029);transform-origin:0 40px;"><i></i>Readmit Rate Trend (Discharge to Home Health)</div>
<div class="t" style="left:753.00px;top:443.90px;font-size:6.3px;color:#333;transform:scaleX(0.9864);transform-origin:0 40px;"><i></i>Readmit Rate Trend (Discharge to IP SNF)</div>
<div class="t" style="left:943.60px;top:443.90px;font-size:6.3px;color:#333;transform:scaleX(1.0198);transform-origin:0 40px;"><i></i>Discharge Profile, Monthly Trend</div>
<svg width="1146" height="609"><line x1="387.9" x2="540.1" y1="497.1" y2="497.1" stroke="#f0f0f0" stroke-width=".7"/><line x1="387.9" x2="540.1" y1="513.2" y2="513.2" stroke="#f0f0f0" stroke-width=".7"/><line x1="387.9" x2="540.1" y1="529.3" y2="529.3" stroke="#f0f0f0" stroke-width=".7"/><polyline fill="none" stroke="#3c587e" stroke-width="1.0" stroke-linejoin="round" points="387.9,507.1 401.7,512.9 415.6,504.9 429.4,505.9 443.2,513.7 457.1,517.2 470.9,515.4 484.8,521.7 498.6,513.7 512.4,509.2 526.3,505.1 540.1,514.2"/><line x1="387.9" x2="540.1" y1="545.7" y2="545.7" stroke="#999" stroke-width="1.1"/><line x1="387.9" x2="387.9" y1="543.2" y2="545.7" stroke="#999" stroke-width="1"/><line x1="401.7" x2="401.7" y1="543.2" y2="545.7" stroke="#999" stroke-width="1"/><line x1="415.6" x2="415.6" y1="543.2" y2="545.7" stroke="#999" stroke-width="1"/><line x1="429.4" x2="429.4" y1="543.2" y2="545.7" stroke="#999" stroke-width="1"/><line x1="443.2" x2="443.2" y1="543.2" y2="545.7" stroke="#999" stroke-width="1"/><line x1="457.1" x2="457.1" y1="543.2" y2="545.7" stroke="#999" stroke-width="1"/><line x1="470.9" x2="470.9" y1="543.2" y2="545.7" stroke="#999" stroke-width="1"/><line x1="484.8" x2="484.8" y1="543.2" y2="545.7" stroke="#999" stroke-width="1"/><line x1="498.6" x2="498.6" y1="543.2" y2="545.7" stroke="#999" stroke-width="1"/><line x1="512.4" x2="512.4" y1="543.2" y2="545.7" stroke="#999" stroke-width="1"/><line x1="526.3" x2="526.3" y1="543.2" y2="545.7" stroke="#999" stroke-width="1"/><line x1="540.1" x2="540.1" y1="543.2" y2="545.7" stroke="#999" stroke-width="1"/><rect x="387.9" y="563.6" width="152.2" height="5.6" fill="#eef0f3"/><rect x="395.5" y="563.6" width="136.8" height="5.6" fill="#d4deea"/></svg>
<div class="t" style="left:372.41px;top:458.70px;font-size:4.3px;color:#555;transform:scaleX(0.9500);transform-origin:100% 40px;"><i></i>15.0%</div>
<div class="t" style="left:372.41px;top:474.80px;font-size:4.3px;color:#555;transform:scaleX(0.9500);transform-origin:100% 40px;"><i></i>10.0%</div>
<div class="t" style="left:374.80px;top:490.90px;font-size:4.3px;color:#555;transform:scaleX(0.9500);transform-origin:100% 40px;"><i></i>5.0%</div>
<div class="t" style="left:374.80px;top:507.00px;font-size:4.3px;color:#555;transform:scaleX(0.9500);transform-origin:100% 40px;"><i></i>0.0%</div>
<div class="t" style="left:379.03px;top:512.20px;font-size:4.4px;color:#3a3a3a;transform:rotate(-38deg) scaleX(0.9348);transform-origin:100% 40px;"><i></i>Dec..</div>
<div class="t" style="left:393.60px;top:512.20px;font-size:4.4px;color:#3a3a3a;transform:rotate(-38deg) scaleX(1.0064);transform-origin:100% 40px;"><i></i>Jan..</div>
<div class="t" style="left:406.95px;top:512.20px;font-size:4.4px;color:#3a3a3a;transform:rotate(-38deg) scaleX(0.9574);transform-origin:100% 40px;"><i></i>Feb..</div>
<div class="t" style="left:421.03px;top:512.20px;font-size:4.4px;color:#3a3a3a;transform:rotate(-38deg) scaleX(0.9816);transform-origin:100% 40px;"><i></i>Mar..</div>
<div class="t" style="left:435.60px;top:512.20px;font-size:4.4px;color:#3a3a3a;transform:rotate(-38deg) scaleX(1.0608);transform-origin:100% 40px;"><i></i>Apr..</div>
<div class="t" style="left:448.05px;top:512.20px;font-size:4.4px;color:#3a3a3a;transform:rotate(-38deg) scaleX(0.9204);transform-origin:100% 40px;"><i></i>May..</div>
<div class="t" style="left:462.78px;top:512.20px;font-size:4.4px;color:#3a3a3a;transform:rotate(-38deg) scaleX(1.0064);transform-origin:100% 40px;"><i></i>Jun..</div>
<div class="t" style="left:478.09px;top:512.20px;font-size:4.4px;color:#3a3a3a;transform:rotate(-38deg) scaleX(1.1897);transform-origin:100% 40px;"><i></i>Jul..</div>
<div class="t" style="left:489.72px;top:512.20px;font-size:4.4px;color:#3a3a3a;transform:rotate(-38deg) scaleX(0.9344);transform-origin:100% 40px;"><i></i>Aug..</div>
<div class="t" style="left:503.55px;top:512.20px;font-size:4.4px;color:#3a3a3a;transform:rotate(-38deg) scaleX(0.9344);transform-origin:100% 40px;"><i></i>Sep..</div>
<div class="t" style="left:518.37px;top:512.20px;font-size:4.4px;color:#3a3a3a;transform:rotate(-38deg) scaleX(1.0334);transform-origin:100% 40px;"><i></i>Oct..</div>
<div class="t" style="left:531.56px;top:512.20px;font-size:4.4px;color:#3a3a3a;transform:rotate(-38deg) scaleX(0.9655);transform-origin:100% 40px;"><i></i>Nov..</div>
<div class="t" style="left:407.59px;top:462.60px;font-size:6px;color:#444;transform:scaleX(0.9300);transform-origin:50% 40px;"><i></i>12.6%</div>
<div class="t" style="left:435.76px;top:468.60px;font-size:6px;color:#444;transform:scaleX(0.9300);transform-origin:50% 40px;"><i></i>9.9%</div>
<div class="t" style="left:463.66px;top:470.40px;font-size:6px;color:#444;transform:scaleX(0.9300);transform-origin:50% 40px;"><i></i>9.4%</div>
<div class="t" style="left:491.06px;top:468.60px;font-size:6px;color:#444;transform:scaleX(0.9300);transform-origin:50% 40px;"><i></i>9.9%</div>
<div class="t" style="left:526.56px;top:468.60px;font-size:6px;color:#444;transform:scaleX(0.9300);transform-origin:50% 40px;"><i></i>9.9%</div>
<svg width="1146" height="609"><line x1="578.5" x2="730.6" y1="497.1" y2="497.1" stroke="#f0f0f0" stroke-width=".7"/><line x1="578.5" x2="730.6" y1="513.2" y2="513.2" stroke="#f0f0f0" stroke-width=".7"/><line x1="578.5" x2="730.6" y1="529.3" y2="529.3" stroke="#f0f0f0" stroke-width=".7"/><polyline fill="none" stroke="#3c587e" stroke-width="1.0" stroke-linejoin="round" points="578.5,526.8 592.3,520.2 606.2,527.5 620.0,521.0 633.8,527.8 647.6,527.0 661.5,527.5 675.3,531.2 689.1,526.0 702.9,533.8 716.8,526.2 730.6,518.6"/><line x1="578.5" x2="730.6" y1="545.7" y2="545.7" stroke="#999" stroke-width="1.1"/><line x1="578.5" x2="578.5" y1="543.2" y2="545.7" stroke="#999" stroke-width="1"/><line x1="592.3" x2="592.3" y1="543.2" y2="545.7" stroke="#999" stroke-width="1"/><line x1="606.2" x2="606.2" y1="543.2" y2="545.7" stroke="#999" stroke-width="1"/><line x1="620.0" x2="620.0" y1="543.2" y2="545.7" stroke="#999" stroke-width="1"/><line x1="633.8" x2="633.8" y1="543.2" y2="545.7" stroke="#999" stroke-width="1"/><line x1="647.6" x2="647.6" y1="543.2" y2="545.7" stroke="#999" stroke-width="1"/><line x1="661.5" x2="661.5" y1="543.2" y2="545.7" stroke="#999" stroke-width="1"/><line x1="675.3" x2="675.3" y1="543.2" y2="545.7" stroke="#999" stroke-width="1"/><line x1="689.1" x2="689.1" y1="543.2" y2="545.7" stroke="#999" stroke-width="1"/><line x1="702.9" x2="702.9" y1="543.2" y2="545.7" stroke="#999" stroke-width="1"/><line x1="716.8" x2="716.8" y1="543.2" y2="545.7" stroke="#999" stroke-width="1"/><line x1="730.6" x2="730.6" y1="543.2" y2="545.7" stroke="#999" stroke-width="1"/><rect x="578.5" y="563.6" width="152.1" height="5.6" fill="#eef0f3"/><rect x="586.1" y="563.6" width="136.7" height="5.6" fill="#d4deea"/></svg>
<div class="t" style="left:562.91px;top:458.70px;font-size:4.3px;color:#555;transform:scaleX(0.9500);transform-origin:100% 40px;"><i></i>30.0%</div>
<div class="t" style="left:562.91px;top:474.80px;font-size:4.3px;color:#555;transform:scaleX(0.9500);transform-origin:100% 40px;"><i></i>20.0%</div>
<div class="t" style="left:562.91px;top:490.90px;font-size:4.3px;color:#555;transform:scaleX(0.9500);transform-origin:100% 40px;"><i></i>10.0%</div>
<div class="t" style="left:565.30px;top:507.00px;font-size:4.3px;color:#555;transform:scaleX(0.9500);transform-origin:100% 40px;"><i></i>0.0%</div>
<div class="t" style="left:569.63px;top:512.20px;font-size:4.4px;color:#3a3a3a;transform:rotate(-38deg) scaleX(0.9348);transform-origin:100% 40px;"><i></i>Dec..</div>
<div class="t" style="left:584.19px;top:512.20px;font-size:4.4px;color:#3a3a3a;transform:rotate(-38deg) scaleX(1.0064);transform-origin:100% 40px;"><i></i>Jan..</div>
<div class="t" style="left:597.53px;top:512.20px;font-size:4.4px;color:#3a3a3a;transform:rotate(-38deg) scaleX(0.9574);transform-origin:100% 40px;"><i></i>Feb..</div>
<div class="t" style="left:611.60px;top:512.20px;font-size:4.4px;color:#3a3a3a;transform:rotate(-38deg) scaleX(0.9816);transform-origin:100% 40px;"><i></i>Mar..</div>
<div class="t" style="left:626.16px;top:512.20px;font-size:4.4px;color:#3a3a3a;transform:rotate(-38deg) scaleX(1.0608);transform-origin:100% 40px;"><i></i>Apr..</div>
<div class="t" style="left:638.61px;top:512.20px;font-size:4.4px;color:#3a3a3a;transform:rotate(-38deg) scaleX(0.9204);transform-origin:100% 40px;"><i></i>May..</div>
<div class="t" style="left:653.32px;top:512.20px;font-size:4.4px;color:#3a3a3a;transform:rotate(-38deg) scaleX(1.0064);transform-origin:100% 40px;"><i></i>Jun..</div>
<div class="t" style="left:668.62px;top:512.20px;font-size:4.4px;color:#3a3a3a;transform:rotate(-38deg) scaleX(1.1897);transform-origin:100% 40px;"><i></i>Jul..</div>
<div class="t" style="left:680.24px;top:512.20px;font-size:4.4px;color:#3a3a3a;transform:rotate(-38deg) scaleX(0.9344);transform-origin:100% 40px;"><i></i>Aug..</div>
<div class="t" style="left:694.07px;top:512.20px;font-size:4.4px;color:#3a3a3a;transform:rotate(-38deg) scaleX(0.9344);transform-origin:100% 40px;"><i></i>Sep..</div>
<div class="t" style="left:708.88px;top:512.20px;font-size:4.4px;color:#3a3a3a;transform:rotate(-38deg) scaleX(1.0334);transform-origin:100% 40px;"><i></i>Oct..</div>
<div class="t" style="left:722.06px;top:512.20px;font-size:4.4px;color:#3a3a3a;transform:rotate(-38deg) scaleX(0.9655);transform-origin:100% 40px;"><i></i>Nov..</div>
<div class="t" style="left:584.19px;top:475.60px;font-size:6px;color:#444;transform:scaleX(0.9300);transform-origin:50% 40px;"><i></i>15.7%</div>
<div class="t" style="left:611.09px;top:475.80px;font-size:6px;color:#444;transform:scaleX(0.9300);transform-origin:50% 40px;"><i></i>15.3%</div>
<div class="t" style="left:638.82px;top:482.40px;font-size:6px;color:#444;transform:scaleX(0.9300);transform-origin:50% 40px;"><i></i>11.6%</div>
<div class="t" style="left:667.46px;top:486.10px;font-size:6px;color:#444;transform:scaleX(0.9300);transform-origin:50% 40px;"><i></i>8.9%</div>
<div class="t" style="left:695.76px;top:488.70px;font-size:6px;color:#444;transform:scaleX(0.9300);transform-origin:50% 40px;"><i></i>7.3%</div>
<div class="t" style="left:713.99px;top:474.00px;font-size:6px;color:#444;transform:scaleX(0.9300);transform-origin:50% 40px;"><i></i>16.7%</div>
<svg width="1146" height="609"><line x1="769.4" x2="921" y1="497.1" y2="497.1" stroke="#f0f0f0" stroke-width=".7"/><line x1="769.4" x2="921" y1="513.2" y2="513.2" stroke="#f0f0f0" stroke-width=".7"/><line x1="769.4" x2="921" y1="529.3" y2="529.3" stroke="#f0f0f0" stroke-width=".7"/><polyline fill="none" stroke="#3c587e" stroke-width="1.0" stroke-linejoin="round" points="769.4,523.1 783.2,518.5 797.0,514.6 810.7,512.1 824.5,520.2 838.3,515.6 852.1,513.1 865.9,526.6 879.7,515.3 893.4,522.7 907.2,524.8 921.0,513.5"/><line x1="769.4" x2="921" y1="545.7" y2="545.7" stroke="#999" stroke-width="1.1"/><line x1="769.4" x2="769.4" y1="543.2" y2="545.7" stroke="#999" stroke-width="1"/><line x1="783.2" x2="783.2" y1="543.2" y2="545.7" stroke="#999" stroke-width="1"/><line x1="797.0" x2="797.0" y1="543.2" y2="545.7" stroke="#999" stroke-width="1"/><line x1="810.7" x2="810.7" y1="543.2" y2="545.7" stroke="#999" stroke-width="1"/><line x1="824.5" x2="824.5" y1="543.2" y2="545.7" stroke="#999" stroke-width="1"/><line x1="838.3" x2="838.3" y1="543.2" y2="545.7" stroke="#999" stroke-width="1"/><line x1="852.1" x2="852.1" y1="543.2" y2="545.7" stroke="#999" stroke-width="1"/><line x1="865.9" x2="865.9" y1="543.2" y2="545.7" stroke="#999" stroke-width="1"/><line x1="879.7" x2="879.7" y1="543.2" y2="545.7" stroke="#999" stroke-width="1"/><line x1="893.4" x2="893.4" y1="543.2" y2="545.7" stroke="#999" stroke-width="1"/><line x1="907.2" x2="907.2" y1="543.2" y2="545.7" stroke="#999" stroke-width="1"/><line x1="921.0" x2="921.0" y1="543.2" y2="545.7" stroke="#999" stroke-width="1"/><rect x="769.4" y="563.6" width="151.6" height="5.6" fill="#eef0f3"/><rect x="777.0" y="563.6" width="136.2" height="5.6" fill="#d4deea"/></svg>
<div class="t" style="left:753.71px;top:458.70px;font-size:4.3px;color:#555;transform:scaleX(0.9500);transform-origin:100% 40px;"><i></i>30.0%</div>
<div class="t" style="left:753.71px;top:474.80px;font-size:4.3px;color:#555;transform:scaleX(0.9500);transform-origin:100% 40px;"><i></i>20.0%</div>
<div class="t" style="left:753.71px;top:490.90px;font-size:4.3px;color:#555;transform:scaleX(0.9500);transform-origin:100% 40px;"><i></i>10.0%</div>
<div class="t" style="left:756.10px;top:507.00px;font-size:4.3px;color:#555;transform:scaleX(0.9500);transform-origin:100% 40px;"><i></i>0.0%</div>
<div class="t" style="left:760.53px;top:512.20px;font-size:4.4px;color:#3a3a3a;transform:rotate(-38deg) scaleX(0.9348);transform-origin:100% 40px;"><i></i>Dec..</div>
<div class="t" style="left:775.04px;top:512.20px;font-size:4.4px;color:#3a3a3a;transform:rotate(-38deg) scaleX(1.0064);transform-origin:100% 40px;"><i></i>Jan..</div>
<div class="t" style="left:788.34px;top:512.20px;font-size:4.4px;color:#3a3a3a;transform:rotate(-38deg) scaleX(0.9574);transform-origin:100% 40px;"><i></i>Feb..</div>
<div class="t" style="left:802.37px;top:512.20px;font-size:4.4px;color:#3a3a3a;transform:rotate(-38deg) scaleX(0.9816);transform-origin:100% 40px;"><i></i>Mar..</div>
<div class="t" style="left:816.88px;top:512.20px;font-size:4.4px;color:#3a3a3a;transform:rotate(-38deg) scaleX(1.0608);transform-origin:100% 40px;"><i></i>Apr..</div>
<div class="t" style="left:829.28px;top:512.20px;font-size:4.4px;color:#3a3a3a;transform:rotate(-38deg) scaleX(0.9204);transform-origin:100% 40px;"><i></i>May..</div>
<div class="t" style="left:843.95px;top:512.20px;font-size:4.4px;color:#3a3a3a;transform:rotate(-38deg) scaleX(1.0064);transform-origin:100% 40px;"><i></i>Jun..</div>
<div class="t" style="left:859.20px;top:512.20px;font-size:4.4px;color:#3a3a3a;transform:rotate(-38deg) scaleX(1.1897);transform-origin:100% 40px;"><i></i>Jul..</div>
<div class="t" style="left:870.78px;top:512.20px;font-size:4.4px;color:#3a3a3a;transform:rotate(-38deg) scaleX(0.9344);transform-origin:100% 40px;"><i></i>Aug..</div>
<div class="t" style="left:884.56px;top:512.20px;font-size:4.4px;color:#3a3a3a;transform:rotate(-38deg) scaleX(0.9344);transform-origin:100% 40px;"><i></i>Sep..</div>
<div class="t" style="left:899.33px;top:512.20px;font-size:4.4px;color:#3a3a3a;transform:rotate(-38deg) scaleX(1.0334);transform-origin:100% 40px;"><i></i>Oct..</div>
<div class="t" style="left:912.46px;top:512.20px;font-size:4.4px;color:#3a3a3a;transform:rotate(-38deg) scaleX(0.9655);transform-origin:100% 40px;"><i></i>Nov..</div>
<div class="t" style="left:788.89px;top:469.30px;font-size:6px;color:#444;transform:scaleX(0.9300);transform-origin:50% 40px;"><i></i>19.3%</div>
<div class="t" style="left:815.79px;top:475.30px;font-size:6px;color:#444;transform:scaleX(0.9300);transform-origin:50% 40px;"><i></i>15.9%</div>
<div class="t" style="left:843.09px;top:467.90px;font-size:6px;color:#444;transform:scaleX(0.9300);transform-origin:50% 40px;"><i></i>20.2%</div>
<div class="t" style="left:870.69px;top:470.00px;font-size:6px;color:#444;transform:scaleX(0.9300);transform-origin:50% 40px;"><i></i>18.8%</div>
<div class="t" style="left:903.99px;top:468.20px;font-size:6px;color:#444;transform:scaleX(0.9300);transform-origin:50% 40px;"><i></i>20.0%</div>
<svg width="1146" height="609"><line x1="959.6" x2="1090.7" y1="497.1" y2="497.1" stroke="#f0f0f0" stroke-width=".7"/><line x1="959.6" x2="1090.7" y1="513.2" y2="513.2" stroke="#f0f0f0" stroke-width=".7"/><line x1="959.6" x2="1090.7" y1="529.3" y2="529.3" stroke="#f0f0f0" stroke-width=".7"/><polyline fill="none" stroke="#8f9bb0" stroke-width="0.6" stroke-linejoin="round" points="959.6,538.3 971.5,537.9 983.4,538.6 995.4,539.0 1007.3,539.0 1019.2,539.4 1031.1,539.4 1043.0,539.7 1054.9,539.4 1066.9,539.4 1078.8,538.6 1090.7,538.6"/><polyline fill="none" stroke="#2fd9c0" stroke-width="1.1" stroke-linejoin="round" points="959.6,535.8 971.5,534.8 983.4,535.5 995.4,536.5 1007.3,535.1 1019.2,535.5 1031.1,536.9 1043.0,535.8 1054.9,535.1 1066.9,536.5 1078.8,536.2 1090.7,537.6"/><polyline fill="none" stroke="#3c587e" stroke-width="1.1" stroke-linejoin="round" points="959.6,539.4 971.5,538.6 983.4,539.7 995.4,538.6 1007.3,539.4 1019.2,540.1 1031.1,540.1 1043.0,540.1 1054.9,539.7 1066.9,538.6 1078.8,539.0 1090.7,538.3"/><polyline fill="none" stroke="#b352bb" stroke-width="1.1" stroke-linejoin="round" points="959.6,517.4 971.5,517.7 983.4,517.0 995.4,516.7 1007.3,518.1 1019.2,516.7 1031.1,515.3 1043.0,514.9 1054.9,517.4 1066.9,517.7 1078.8,518.1 1090.7,516.0"/><line x1="959.6" x2="1090.7" y1="545.7" y2="545.7" stroke="#999" stroke-width="1.1"/><line x1="959.6" x2="959.6" y1="543.2" y2="545.7" stroke="#999" stroke-width="1"/><line x1="971.5" x2="971.5" y1="543.2" y2="545.7" stroke="#999" stroke-width="1"/><line x1="983.4" x2="983.4" y1="543.2" y2="545.7" stroke="#999" stroke-width="1"/><line x1="995.4" x2="995.4" y1="543.2" y2="545.7" stroke="#999" stroke-width="1"/><line x1="1007.3" x2="1007.3" y1="543.2" y2="545.7" stroke="#999" stroke-width="1"/><line x1="1019.2" x2="1019.2" y1="543.2" y2="545.7" stroke="#999" stroke-width="1"/><line x1="1031.1" x2="1031.1" y1="543.2" y2="545.7" stroke="#999" stroke-width="1"/><line x1="1043.0" x2="1043.0" y1="543.2" y2="545.7" stroke="#999" stroke-width="1"/><line x1="1054.9" x2="1054.9" y1="543.2" y2="545.7" stroke="#999" stroke-width="1"/><line x1="1066.9" x2="1066.9" y1="543.2" y2="545.7" stroke="#999" stroke-width="1"/><line x1="1078.8" x2="1078.8" y1="543.2" y2="545.7" stroke="#999" stroke-width="1"/><line x1="1090.7" x2="1090.7" y1="543.2" y2="545.7" stroke="#999" stroke-width="1"/><rect x="959.6" y="563.6" width="131.1" height="5.6" fill="#eef0f3"/><rect x="967.2" y="563.6" width="115.7" height="5.6" fill="#d4deea"/></svg>
<div class="t" style="left:945.10px;top:458.70px;font-size:4.3px;color:#555;transform:scaleX(0.9500);transform-origin:100% 40px;"><i></i>100%</div>
<div class="t" style="left:947.49px;top:474.80px;font-size:4.3px;color:#555;transform:scaleX(0.9500);transform-origin:100% 40px;"><i></i>67%</div>
<div class="t" style="left:947.49px;top:490.90px;font-size:4.3px;color:#555;transform:scaleX(0.9500);transform-origin:100% 40px;"><i></i>33%</div>
<div class="t" style="left:949.89px;top:507.00px;font-size:4.3px;color:#555;transform:scaleX(0.9500);transform-origin:100% 40px;"><i></i>0%</div>
<div class="t" style="left:950.73px;top:512.20px;font-size:4.4px;color:#3a3a3a;transform:rotate(-38deg) scaleX(0.9348);transform-origin:100% 40px;"><i></i>Dec..</div>
<div class="t" style="left:963.38px;top:512.20px;font-size:4.4px;color:#3a3a3a;transform:rotate(-38deg) scaleX(1.0064);transform-origin:100% 40px;"><i></i>Jan..</div>
<div class="t" style="left:974.81px;top:512.20px;font-size:4.4px;color:#3a3a3a;transform:rotate(-38deg) scaleX(0.9574);transform-origin:100% 40px;"><i></i>Feb..</div>
<div class="t" style="left:986.97px;top:512.20px;font-size:4.4px;color:#3a3a3a;transform:rotate(-38deg) scaleX(0.9816);transform-origin:100% 40px;"><i></i>Mar..</div>
<div class="t" style="left:999.62px;top:512.20px;font-size:4.4px;color:#3a3a3a;transform:rotate(-38deg) scaleX(1.0608);transform-origin:100% 40px;"><i></i>Apr..</div>
<div class="t" style="left:1010.16px;top:512.20px;font-size:4.4px;color:#3a3a3a;transform:rotate(-38deg) scaleX(0.9204);transform-origin:100% 40px;"><i></i>May..</div>
<div class="t" style="left:1022.97px;top:512.20px;font-size:4.4px;color:#3a3a3a;transform:rotate(-38deg) scaleX(1.0064);transform-origin:100% 40px;"><i></i>Jun..</div>
<div class="t" style="left:1036.36px;top:512.20px;font-size:4.4px;color:#3a3a3a;transform:rotate(-38deg) scaleX(1.1897);transform-origin:100% 40px;"><i></i>Jul..</div>
<div class="t" style="left:1046.07px;top:512.20px;font-size:4.4px;color:#3a3a3a;transform:rotate(-38deg) scaleX(0.9344);transform-origin:100% 40px;"><i></i>Aug..</div>
<div class="t" style="left:1057.99px;top:512.20px;font-size:4.4px;color:#3a3a3a;transform:rotate(-38deg) scaleX(0.9344);transform-origin:100% 40px;"><i></i>Sep..</div>
<div class="t" style="left:1070.89px;top:512.20px;font-size:4.4px;color:#3a3a3a;transform:rotate(-38deg) scaleX(1.0334);transform-origin:100% 40px;"><i></i>Oct..</div>
<div class="t" style="left:1082.16px;top:512.20px;font-size:4.4px;color:#3a3a3a;transform:rotate(-38deg) scaleX(0.9655);transform-origin:100% 40px;"><i></i>Nov..</div>
<div class="t" style="left:967.60px;top:473.20px;font-size:4.4px;color:#b352bb;transform:scaleX(0.9300);transform-origin:50% 40px;"><i></i>57%</div>
<div class="t" style="left:990.00px;top:472.20px;font-size:4.4px;color:#b352bb;transform:scaleX(0.9300);transform-origin:50% 40px;"><i></i>60%</div>
<div class="t" style="left:1014.40px;top:472.20px;font-size:4.4px;color:#b352bb;transform:scaleX(0.9300);transform-origin:50% 40px;"><i></i>59%</div>
<div class="t" style="left:1037.40px;top:470.00px;font-size:4.4px;color:#b352bb;transform:scaleX(0.9300);transform-origin:50% 40px;"><i></i>62%</div>
<div class="t" style="left:1062.20px;top:473.20px;font-size:4.4px;color:#b352bb;transform:scaleX(0.9300);transform-origin:50% 40px;"><i></i>58%</div>
<div class="t" style="left:1081.40px;top:471.50px;font-size:4.4px;color:#b352bb;transform:scaleX(0.9300);transform-origin:50% 40px;"><i></i>61%</div>
<div class="t" style="left:967.60px;top:489.90px;font-size:4.4px;color:#2fd9c0;transform:scaleX(0.9300);transform-origin:50% 40px;"><i></i>22%</div>
<div class="t" style="left:990.00px;top:491.60px;font-size:4.4px;color:#2fd9c0;transform:scaleX(0.9300);transform-origin:50% 40px;"><i></i>19%</div>
<div class="t" style="left:1014.40px;top:490.20px;font-size:4.4px;color:#2fd9c0;transform:scaleX(0.9300);transform-origin:50% 40px;"><i></i>21%</div>
<div class="t" style="left:1037.40px;top:490.90px;font-size:4.4px;color:#2fd9c0;transform:scaleX(0.9300);transform-origin:50% 40px;"><i></i>21%</div>
<div class="t" style="left:1062.20px;top:491.60px;font-size:4.4px;color:#2fd9c0;transform:scaleX(0.9300);transform-origin:50% 40px;"><i></i>19%</div>
<div class="t" style="left:1081.40px;top:492.70px;font-size:4.4px;color:#2fd9c0;transform:scaleX(0.9300);transform-origin:50% 40px;"><i></i>17%</div>
<div class="t" style="left:943.90px;top:189.10px;font-size:7px;color:#333;transform:scaleX(0.8994);transform-origin:0 40px;"><i></i>Included Dates</div>
<div class="r" style="left:943.30px;top:234.90px;width:143.30px;height:80.10px;background:#fff;border:1px solid #ececec;box-sizing:border-box;"></div>
<svg width="1146" height="609"><rect x="943.30" y="244.50" width="143.30" height="9.75" fill="#f3f3f3"/></svg>
<svg width="1146" height="609"><rect x="943.30" y="264.00" width="143.30" height="9.75" fill="#f3f3f3"/></svg>
<svg width="1146" height="609"><rect x="943.30" y="283.50" width="143.30" height="9.75" fill="#f3f3f3"/></svg>
<svg width="1146" height="609"><rect x="943.30" y="303.00" width="143.30" height="9.75" fill="#f3f3f3"/></svg>
<svg width="1146" height="609"><rect x="988.50" y="234.90" width="0.60" height="80.10" fill="#e6e6e6"/></svg>
<svg width="1146" height="609"><rect x="1036.60" y="234.90" width="0.60" height="80.10" fill="#e6e6e6"/></svg>
<div class="t" style="left:947.20px;top:202.40px;font-size:5.3px;color:#333;transform:scaleX(0.8866);transform-origin:0 40px;font-weight:bold;"><i></i>planpayer</div>
<div class="t" style="left:1003.65px;top:202.40px;font-size:5.3px;color:#333;transform:scaleX(0.8987);transform-origin:100% 40px;font-weight:bold;"><i></i>ReportStart</div>
<div class="t" style="left:1055.91px;top:202.40px;font-size:5.3px;color:#333;transform:scaleX(0.8823);transform-origin:100% 40px;font-weight:bold;"><i></i>ReportEnd</div>
<div class="t" style="left:947.20px;top:211.60px;font-size:5.1px;color:#505050;transform:scaleX(0.9200);transform-origin:0 40px;"><i></i>Anthem Med Adv</div>
<div class="t" style="left:1006.14px;top:211.60px;font-size:5.1px;color:#505050;transform:scaleX(0.9500);transform-origin:100% 40px;"><i></i>Jan 2, 2017</div>
<div class="t" style="left:1052.66px;top:211.60px;font-size:5.1px;color:#505050;transform:scaleX(0.9500);transform-origin:100% 40px;"><i></i>Nov 29, 2019</div>
<div class="t" style="left:947.20px;top:221.35px;font-size:5.1px;color:#505050;transform:scaleX(0.9200);transform-origin:0 40px;"><i></i>Blue Cross Blue</div>
<div class="t" style="left:1002.46px;top:221.35px;font-size:5.1px;color:#505050;transform:scaleX(0.9500);transform-origin:100% 40px;"><i></i>Dec 30, 2016</div>
<div class="t" style="left:1052.66px;top:221.35px;font-size:5.1px;color:#505050;transform:scaleX(0.9500);transform-origin:100% 40px;"><i></i>Nov 30, 2019</div>
<div class="t" style="left:947.20px;top:231.10px;font-size:5.1px;color:#505050;transform:scaleX(0.9200);transform-origin:0 40px;"><i></i>Blue Cross Blue</div>
<div class="t" style="left:1006.14px;top:231.10px;font-size:5.1px;color:#505050;transform:scaleX(0.9500);transform-origin:100% 40px;"><i></i>Jan 3, 2017</div>
<div class="t" style="left:1052.66px;top:231.10px;font-size:5.1px;color:#505050;transform:scaleX(0.9500);transform-origin:100% 40px;"><i></i>Nov 28, 2019</div>
<div class="t" style="left:947.20px;top:240.85px;font-size:5.1px;color:#505050;transform:scaleX(0.9200);transform-origin:0 40px;"><i></i>Blue Cross Blue</div>
<div class="t" style="left:1002.46px;top:240.85px;font-size:5.1px;color:#505050;transform:scaleX(0.9500);transform-origin:100% 40px;"><i></i>Dec 28, 2016</div>
<div class="t" style="left:1053.51px;top:240.85px;font-size:5.1px;color:#505050;transform:scaleX(0.9500);transform-origin:100% 40px;"><i></i>Jun 24, 2018</div>
<div class="t" style="left:947.20px;top:250.60px;font-size:5.1px;color:#505050;transform:scaleX(0.9200);transform-origin:0 40px;"><i></i>CMS MSSP</div>
<div class="t" style="left:1006.14px;top:250.60px;font-size:5.1px;color:#505050;transform:scaleX(0.9500);transform-origin:100% 40px;"><i></i>Jan 1, 2018</div>
<div class="t" style="left:1052.66px;top:250.60px;font-size:5.1px;color:#505050;transform:scaleX(0.9500);transform-origin:100% 40px;"><i></i>Nov 30, 2019</div>
<div class="t" style="left:947.20px;top:260.35px;font-size:5.1px;color:#505050;transform:scaleX(0.9200);transform-origin:0 40px;"><i></i>CMS NGACO</div>
<div class="t" style="left:1006.14px;top:260.35px;font-size:5.1px;color:#505050;transform:scaleX(0.9500);transform-origin:100% 40px;"><i></i>Jan 1, 2017</div>
<div class="t" style="left:1052.66px;top:260.35px;font-size:5.1px;color:#505050;transform:scaleX(0.9500);transform-origin:100% 40px;"><i></i>Nov 30, 2019</div>
<div class="t" style="left:947.20px;top:270.10px;font-size:5.1px;color:#505050;transform:scaleX(0.9200);transform-origin:0 40px;"><i></i>Cigna</div>
<div class="t" style="left:1006.14px;top:270.10px;font-size:5.1px;color:#505050;transform:scaleX(0.9500);transform-origin:100% 40px;"><i></i>Jan 1, 2017</div>
<div class="t" style="left:1052.66px;top:270.10px;font-size:5.1px;color:#505050;transform:scaleX(0.9500);transform-origin:100% 40px;"><i></i>Nov 29, 2019</div>
<svg width="1146" height="609"><rect x="1094.00" y="234.90" width="8.00" height="80.10" fill="#f1f1f1"/></svg>
<svg width="1146" height="609"><rect x="1094.90" y="243.20" width="6.20" height="34.60" fill="#c1c1c1"/></svg>
<svg width="1146" height="609"><polygon points="1096.6,240.6 1098,239 1099.4,240.6" fill="#a3a3a3"/><polygon points="1096.3,309.6 1099.7,309.6 1098,311.6" fill="#333"/></svg>
<div class="t" style="left:943.30px;top:295.20px;font-size:6.4px;color:#333;transform:scaleX(0.9981);transform-origin:0 40px;"><i></i>Admits by Discharge Disposition</div>
<svg width="1146" height="609"><path d="M1022.60 350.80A52.2 52.2 0 1 1 987.27 441.42L997.15 430.68A37.6 37.6 0 1 0 1022.60 365.40Z" fill="#1f4e85"/><path d="M987.27 441.42A52.2 52.2 0 0 1 974.80 382.02L988.17 387.89A37.6 37.6 0 0 0 997.15 430.68Z" fill="#1ee8b7"/><path d="M974.80 382.02A52.2 52.2 0 0 1 1002.46 354.84L1008.09 368.31A37.6 37.6 0 0 0 988.17 387.89Z" fill="#a01db0"/><path d="M1002.46 354.84A52.2 52.2 0 0 1 1010.68 352.18L1014.01 366.39A37.6 37.6 0 0 0 1008.09 368.31Z" fill="#80cfc1"/><path d="M1010.68 352.18A52.2 52.2 0 0 1 1016.33 351.18L1018.08 365.67A37.6 37.6 0 0 0 1014.01 366.39Z" fill="#f2566b"/><path d="M1016.33 351.18A52.2 52.2 0 0 1 1017.87 351.01L1019.19 365.55A37.6 37.6 0 0 0 1018.08 365.67Z" fill="#1f4e85"/><path d="M1017.87 351.01A52.2 52.2 0 0 1 1021.05 350.82L1021.48 365.42A37.6 37.6 0 0 0 1019.19 365.55Z" fill="#2e8170"/><path d="M1021.05 350.82A52.2 52.2 0 0 1 1022.60 350.80L1022.60 365.40A37.6 37.6 0 0 0 1021.48 365.42Z" fill="#d48bd0"/><polyline points="1000,349 1005.3,349 1005.8,352" fill="none" stroke="#80cfc1" stroke-width=".6"/><polyline points="977.7,362.3 983,362.3 985.6,364.8" fill="none" stroke="#a01db0" stroke-width=".6"/><polyline points="962,413.1 971.4,413.1" fill="none" stroke="#1ee8b7" stroke-width=".6"/><polyline points="1071,421 1073.5,422.8 1080.5,422.8" fill="none" stroke="#1f4e85" stroke-width=".6"/></svg>
<div class="t" style="left:963.90px;top:310.90px;font-size:5.7px;color:#444;transform:scaleX(0.9356);transform-origin:0 40px;"><i></i>IP LTC/Rehab</div>
<div class="t" style="left:959.00px;top:324.30px;font-size:5.7px;color:#444;transform:scaleX(0.8595);transform-origin:0 40px;"><i></i>IP SNF</div>
<div class="t" style="left:943.30px;top:375.20px;font-size:5.7px;color:#444;transform:scaleX(1.0014);transform-origin:0 40px;"><i></i>Health</div>
<div class="t" style="left:1083.20px;top:384.80px;font-size:5.7px;color:#444;transform:scaleX(0.9931);transform-origin:0 40px;"><i></i>Home</div>
<div class="t" style="left:1000.00px;top:366.80px;font-size:12.4px;color:#111;transform:scaleX(0.9805);transform-origin:0 40px;"><i></i>29.276K</div>
<svg width="1146" height="609"><rect x="1089.8" y="586.9" width="3.4" height="3" fill="#333"/></svg>
<div class="t" style="left:1094.30px;top:550.00px;font-size:3.9px;color:#555;transform:scaleX(0.9325);transform-origin:0 40px;"><i></i>Powered by QuickSight</div>
</div></body></html>
